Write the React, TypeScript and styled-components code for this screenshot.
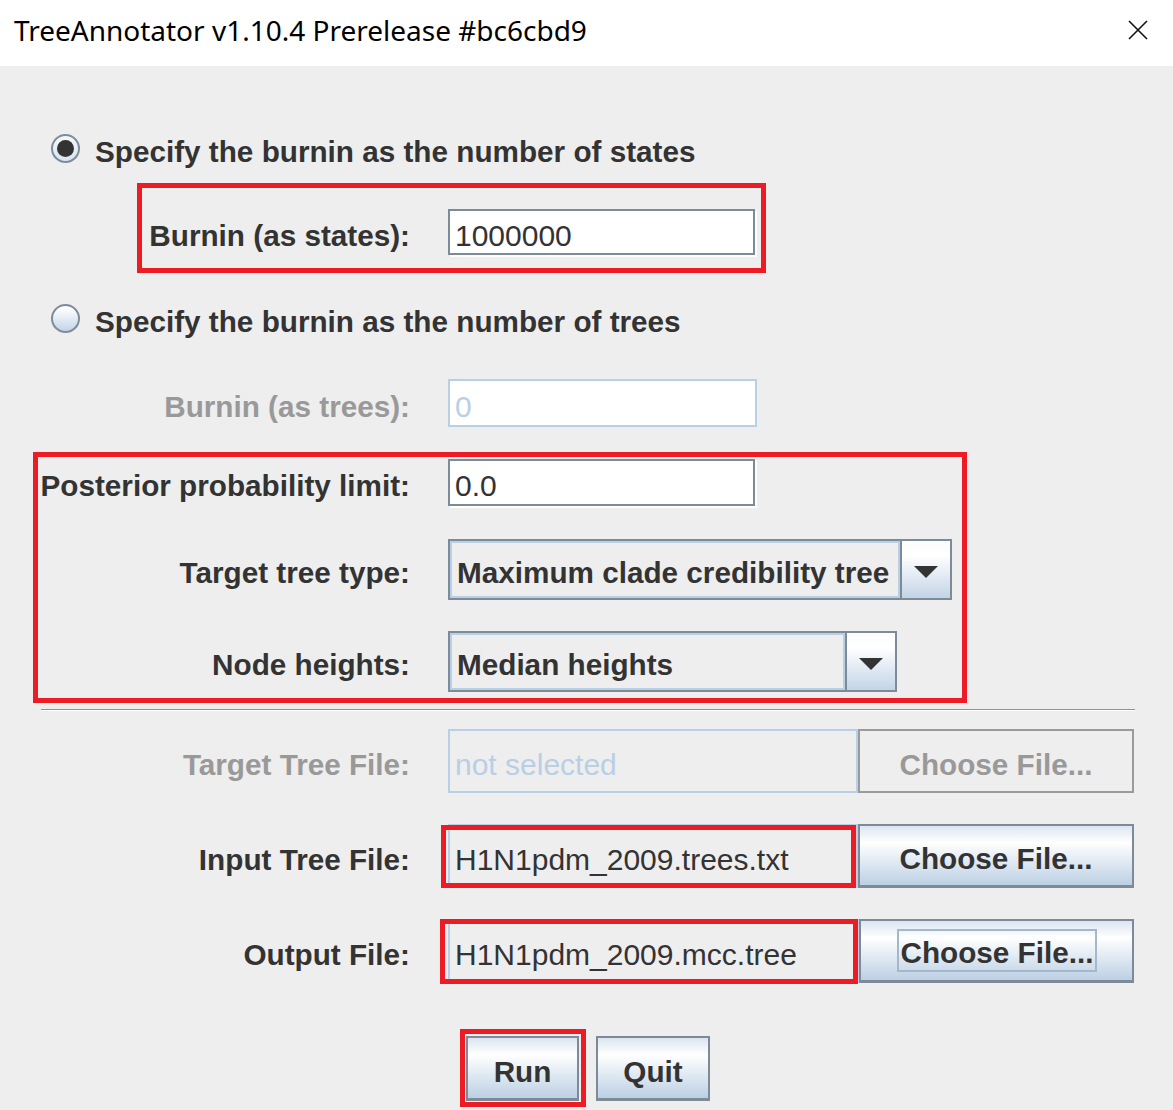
import React from "react";
import styled, { createGlobalStyle } from "styled-components";

const GlobalStyle = createGlobalStyle`
  html, body { margin: 0; padding: 0; background: #eeeeee; }
  body { font-family: "Liberation Sans", Arial, sans-serif; }
  * { box-sizing: border-box; }
`;

const Window = styled.div`
  width: 1173px;
  height: 1110px;
  overflow: hidden;
  background: #eeeeee;
  display: flex;
  flex-direction: column;
`;

const TitleBar = styled.div`
  height: 66px;
  flex: none;
  background: #ffffff;
  display: flex;
  align-items: center;
  justify-content: space-between;
  padding: 0 25px 0 14px;
`;

const Title = styled.div`
  font-family: "Noto Sans", sans-serif;
  font-size: 28px;
  line-height: 1;
  color: #000;
  padding-bottom: 6px;
  white-space: nowrap;
`;

const CloseIcon = styled.svg`
  width: 20px;
  height: 20px;
  margin-bottom: 6px;
`;

const Panel = styled.div`
  flex: 1;
  display: flex;
  flex-direction: column;
`;

const RadioRow = styled.div<{ $top: number }>`
  margin-top: ${(p) => p.$top}px;
  height: 30px;
  display: flex;
  align-items: center;
  gap: 15px;
  padding-left: 51px;
`;

const RadioCircle = styled.span<{ $checked?: boolean }>`
  flex: none;
  width: 29px;
  height: 29px;
  border-radius: 50%;
  border: 2px solid #7f8d9a;
  display: grid;
  place-items: center;
  background: ${(p) =>
    p.$checked
      ? "linear-gradient(#f6f9fc, #d9e4ef)"
      : "linear-gradient(#fdfeff 10%, #c3d5e7)"};
`;

const RadioDot = styled.span`
  width: 17px;
  height: 17px;
  border-radius: 50%;
  background: #333333;
`;

const RadioText = styled.span`
  font-weight: bold;
  font-size: 29.7px;
  line-height: 34px;
  padding-top: 7px;
  color: #333333;
  white-space: nowrap;
`;

const FormRow = styled.div<{ $top: number; $h: number }>`
  position: relative;
  margin-top: ${(p) => p.$top}px;
  height: ${(p) => p.$h}px;
  display: grid;
  grid-template-columns: 410px max-content;
  column-gap: 38px;
  align-items: stretch;
`;

const Label = styled.span<{ $disabled?: boolean }>`
  align-self: center;
  justify-self: end;
  font-weight: bold;
  font-size: 29.7px;
  line-height: 34px;
  padding-top: 7px;
  color: ${(p) => (p.$disabled ? "#999999" : "#333333")};
  white-space: nowrap;
`;

type FieldKind = "normal" | "disabled" | "readonly" | "readonlyDisabled";

const TextField = styled.div<{ $w: number; $kind: FieldKind }>`
  width: ${(p) => p.$w}px;
  display: flex;
  align-items: center;
  padding: 7px 0 0 5px;
  font-size: 30px;
  line-height: 34px;
  white-space: nowrap;
  overflow: hidden;
  border: 2px solid
    ${(p) => (p.$kind === "normal" ? "#7d8a97" : "#b8cfe5")};
  box-shadow: ${(p) => (p.$kind === "normal" ? "2px 2px 0 #ffffff" : "none")};
  background: ${(p) =>
    p.$kind === "normal" || p.$kind === "disabled" ? "#ffffff" : "#eeeeee"};
  color: ${(p) =>
    p.$kind === "disabled" || p.$kind === "readonlyDisabled"
      ? "#b8cfe5"
      : "#333333"};
`;

const Combo = styled.div<{ $w: number }>`
  width: ${(p) => p.$w}px;
  display: flex;
  border: 2px solid #7d8a97;
  background: #eeeeee;
`;

const ComboValue = styled.div`
  flex: 1;
  display: flex;
  align-items: center;
  padding: 7px 0 0 5px;
  border: 2px solid #b8cfe5;
  font-weight: bold;
  font-size: 29.7px;
  line-height: 34px;
  color: #333333;
  white-space: nowrap;
`;

const ComboArrow = styled.div`
  flex: none;
  width: 50px;
  border-left: 2px solid #7d8a97;
  background: linear-gradient(#fbfcfe 0%, #ffffff 25%, #c3d4e6 100%);
  display: flex;
  align-items: center;
  justify-content: center;
  padding-top: 4px;
`;

const Separator = styled.div`
  margin: 17px 0 0 41px;
  width: 1094px;
  height: 2px;
  border-top: 1px solid #7f92c0;
  border-bottom: 1px solid #ffffff;
`;

const FileControl = styled.div`
  display: flex;
`;

const Button = styled.button<{ $w: number; $disabled?: boolean }>`
  width: ${(p) => p.$w}px;
  height: 100%;
  margin: 0;
  padding: 7px 0 0 0;
  display: flex;
  align-items: center;
  justify-content: center;
  font-family: "Liberation Sans", Arial, sans-serif;
  font-weight: bold;
  font-size: 29.7px;
  line-height: 34px;
  white-space: nowrap;
  color: ${(p) => (p.$disabled ? "#999999" : "#333333")};
  border: 2px solid ${(p) => (p.$disabled ? "#9a9a9a" : "#7d8a97")};
  border-bottom-width: ${(p) => (p.$disabled ? 2 : 3)}px;
  background: ${(p) =>
    p.$disabled
      ? "#eeeeee"
      : "linear-gradient(#dbe5f0 0%, #ffffff 28%, #bcd0e4 100%)"};
`;

const FocusRing = styled.span`
  height: 43px;
  display: flex;
  align-items: center;
  padding: 5px 1px 0 2px;
  margin-top: -7px;
  border: 2px solid #a3b8cc;
`;

const ButtonBar = styled.div`
  margin-top: 53px;
  height: 65px;
  display: flex;
  justify-content: center;
  gap: 17px;
  padding-left: 3px;
`;

const Anchor = styled.div<{ $top?: number }>`
  position: relative;
  margin-top: ${(p) => p.$top ?? 0}px;
  display: flex;
  flex-direction: column;
`;

const RunWrap = styled.div`
  position: relative;
  display: flex;
`;

const Highlight = styled.div<{ $x: number; $y: number; $w: number; $h: number }>`
  position: absolute;
  left: ${(p) => p.$x}px;
  top: ${(p) => p.$y}px;
  width: ${(p) => p.$w}px;
  height: ${(p) => p.$h}px;
  border: 5px solid #ed1c24;
  pointer-events: none;
`;

const Arrow = () => (
  <svg width="24" height="12" viewBox="0 0 24 12">
    <polygon points="0,0 24,0 12,12" fill="#333333" />
  </svg>
);

export default function App() {
  return (
    <Window>
      <GlobalStyle />
      <TitleBar>
        <Title>TreeAnnotator v1.10.4 Prerelease #bc6cbd9</Title>
        <CloseIcon viewBox="0 0 20 20">
          <path d="M1 1 L19 19 M19 1 L1 19" stroke="#111" strokeWidth="1.6" fill="none" />
        </CloseIcon>
      </TitleBar>
      <Panel>
        <RadioRow $top={67}>
          <RadioCircle $checked>
            <RadioDot />
          </RadioCircle>
          <RadioText>Specify the burnin as the number of states</RadioText>
        </RadioRow>

        <FormRow $top={46} $h={46}>
          <Label>Burnin (as states):</Label>
          <TextField $w={307} $kind="normal">1000000</TextField>
          <Highlight $x={137} $y={-26} $w={629} $h={90} />
        </FormRow>

        <RadioRow $top={48}>
          <RadioCircle />
          <RadioText>Specify the burnin as the number of trees</RadioText>
        </RadioRow>

        <FormRow $top={46} $h={48}>
          <Label $disabled>Burnin (as trees):</Label>
          <TextField $w={309} $kind="disabled">0</TextField>
        </FormRow>

        <Anchor $top={32}>
          <FormRow $top={0} $h={47}>
            <Label>Posterior probability limit:</Label>
            <TextField $w={307} $kind="normal">0.0</TextField>
          </FormRow>
          <FormRow $top={33} $h={61}>
            <Label>Target tree type:</Label>
            <Combo $w={504}>
              <ComboValue>Maximum clade credibility tree</ComboValue>
              <ComboArrow>
                <Arrow />
              </ComboArrow>
            </Combo>
          </FormRow>
          <FormRow $top={31} $h={61}>
            <Label>Node heights:</Label>
            <Combo $w={449}>
              <ComboValue>Median heights</ComboValue>
              <ComboArrow>
                <Arrow />
              </ComboArrow>
            </Combo>
          </FormRow>
          <Highlight $x={33} $y={-7} $w={934} $h={251} />
        </Anchor>

        <Separator />

        <FormRow $top={18} $h={64}>
          <Label $disabled>Target Tree File:</Label>
          <FileControl>
            <TextField $w={410} $kind="readonlyDisabled">not selected</TextField>
            <Button $w={276} $disabled>Choose File...</Button>
          </FileControl>
        </FormRow>

        <FormRow $top={31} $h={64}>
          <Label>Input Tree File:</Label>
          <FileControl>
            <TextField $w={410} $kind="readonly">H1N1pdm_2009.trees.txt</TextField>
            <Button $w={276}>Choose File...</Button>
          </FileControl>
          <Highlight $x={441} $y={1} $w={415} $h={63} />
        </FormRow>

        <FormRow $top={31} $h={64}>
          <Label>Output File:</Label>
          <FileControl>
            <TextField $w={411} $kind="readonly">H1N1pdm_2009.mcc.tree</TextField>
            <Button $w={275}>
              <FocusRing>Choose File...</FocusRing>
            </Button>
          </FileControl>
          <Highlight $x={440} $y={0} $w={418} $h={65} />
        </FormRow>

        <ButtonBar>
          <RunWrap>
            <Button $w={113}>Run</Button>
            <Highlight $x={-6} $y={-7} $w={126} $h={78} />
          </RunWrap>
          <Button $w={114}>Quit</Button>
        </ButtonBar>
      </Panel>
    </Window>
  );
}
